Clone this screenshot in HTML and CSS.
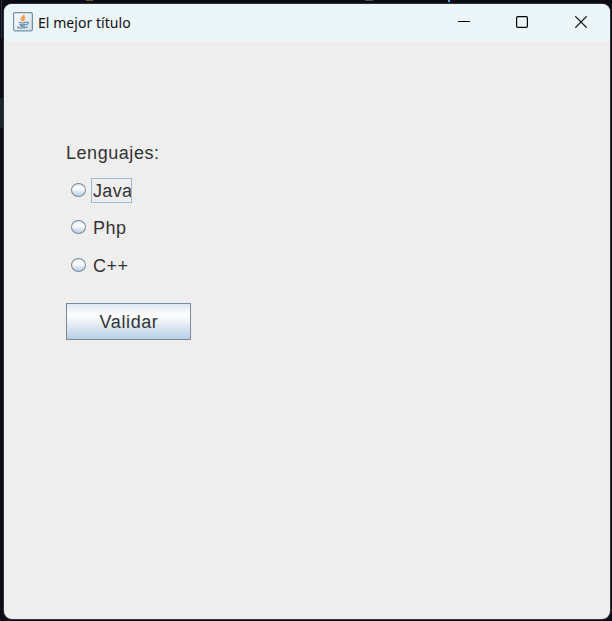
FILE: index.html
```html
<!DOCTYPE html>
<html lang="es">
<head>
<meta charset="utf-8">
<title>El mejor título</title>
<link rel="stylesheet" href="styles.css">
</head>
<body>
<main class="window">
  <header class="titlebar">
    <svg class="app-icon" width="20" height="20" viewBox="0 0 20 20" fill="none">
      <defs><linearGradient id="tile" x2="1" y2="1"><stop stop-color="#fff"/><stop offset="1" stop-color="#d3dde3"/></linearGradient></defs>
      <rect x=".6" y=".6" width="18.8" height="18.3" rx="1.5" fill="url(#tile)" stroke="#6f91a8" stroke-width="1.2"/>
      <path d="M10.8 2.7c.9 2-3 2.8-2.5 4.6.2.7 1 1.2 1.1 1.9M12.3 5.2c-2.5 1.2-2.2 1.8-1.5 2.6.4.5.1 1-.4 1.4" stroke="#f0913f" stroke-width="1.5"/>
      <path d="M5.8 10.3c1.8.7 5.7.6 7.4 0M6.6 12.2c1.6.7 4.7.7 6 0M7.2 13.7c1.5.6 3.7.6 5 0M13.5 10.4c2.5-.5 2.3 1.8-.4 2.5M5.2 14.8c-2 1.4 5.6 1.8 9.4.2" stroke="#5585a5" stroke-width="1.15"/>
    </svg>
    <h1 class="title">El mejor título</h1>
    <div class="controls">
      <svg width="12" height="12" viewBox="0 0 12 12"><path d="M0 5.5h12" stroke="#000"/></svg>
      <svg width="12" height="12" viewBox="0 0 12 12"><rect x=".6" y=".6" width="10.8" height="10.8" rx="1.2" fill="none" stroke="#000" stroke-width="1.2"/></svg>
      <svg width="12" height="12" viewBox="0 0 12 12"><path d="M.3.3l11.4 11.4M11.7.3L.3 11.7" stroke="#000" stroke-width="1.15"/></svg>
    </div>
  </header>
  <form class="form">
    <p class="label">Lenguajes:</p>
    <label class="option"><input class="radio" type="radio" name="lang"><span class="name focused">Java</span></label>
    <label class="option"><input class="radio" type="radio" name="lang"><span class="name">Php</span></label>
    <label class="option"><input class="radio" type="radio" name="lang"><span class="name">C++</span></label>
    <button class="submit" type="button">Validar</button>
  </form>
</main>
</body>
</html>
```
FILE: styles.css
```css
* { box-sizing: border-box; }
body {
  margin: 0;
  height: 621px;
  padding: 4px 2px 2px 4px;
  overflow: hidden;
  background:
    linear-gradient(#4da3dc, #4da3dc) 448px 0 / 2px 2px no-repeat,
    linear-gradient(#66552f, #66552f) 86px 0 / 7px 1px no-repeat,
    linear-gradient(#4a4e59, #4a4e59) 365px 0 / 8px 1px no-repeat,
    linear-gradient(#30303c, #30303c) 1px 0 / 1px 38px no-repeat,
    linear-gradient(#1b2426, #1b2426) 0 98px / 4px 30px no-repeat,
    #0b0c15;
}
.window {
  height: 615px;
  border-radius: 8px;
  overflow: hidden;
  background: #eee;
  box-shadow: 0 0 0 1px #30313a;
}
.titlebar {
  display: flex;
  height: 37px;
  padding: 8px 23px 0 9px;
  background: #ecf5f8;
}
.app-icon { flex: none; }
.title {
  margin: 1px 0 0 5px;
  font: 400 14px/20px "Noto Sans", sans-serif;
  letter-spacing: .05px;
  color: #111;
  white-space: nowrap;
}
.controls {
  display: flex;
  gap: 47px;
  margin: 4px 0 0 auto;
}
.controls svg:first-child { margin-right: -1px; }
.form {
  display: flex;
  flex-direction: column;
  align-items: flex-start;
  padding: 100px 0 0 62px;
  font: 18px/25px "Liberation Sans", sans-serif;
  letter-spacing: .5px;
  color: #333;
}
.label { margin: 0 0 12px; line-height: 25px; letter-spacing: .55px; }
.option {
  display: flex;
  align-items: center;
  height: 25px;
  margin: 0 0 12px 5px;
}
.option:nth-of-type(2) { margin-bottom: 13px; }
.radio {
  appearance: none;
  width: 15px;
  height: 14px;
  margin: 0 5px 1px 0;
  border: 1px solid #7a8a99;
  border-radius: 50%;
  background: linear-gradient(#dde8f3, #fff 35%, #b8cfe5);
}
.name {
  height: 25px;
  padding: 0 0 0 1px;
  border: 1px solid transparent;
  line-height: 24px;
}
.focused {
  width: 41px;
  overflow: hidden;
  border-color: #a3b8cc;
  letter-spacing: .35px;
}
.submit {
  width: 125px;
  height: 37px;
  margin-top: 12.5px;
  padding: 2px 0 0 1px;
  border: 1px solid #7a8a99;
  background: linear-gradient(#dde8f3, #fff 32%, #b8cfe5);
  font: inherit;
  letter-spacing: .6px;
  color: #333;
}
```
